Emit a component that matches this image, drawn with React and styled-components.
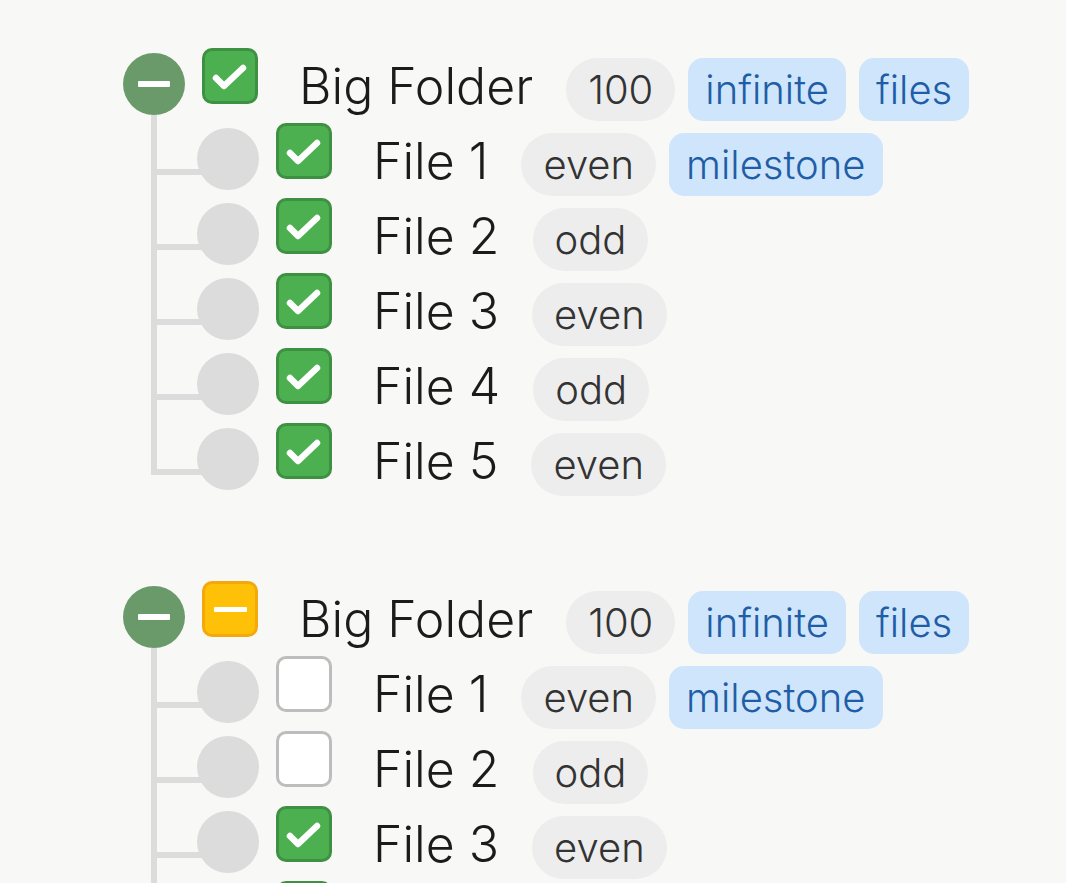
import React from "react";
import styled, { createGlobalStyle, css } from "styled-components";

const GlobalStyle = createGlobalStyle`
  html, body {
    margin: 0;
    padding: 0;
    background: #f8f8f6;
  }
  body {
    font-family: "Inter Light", Inter, "Noto Sans", "Liberation Sans", sans-serif;
    color: #1b1b1b;
  }
  * { box-sizing: border-box; }
`;

const Page = styled.div`
  display: flex;
  flex-direction: column;
  gap: 96px;
  padding: 53px 0 0 123px;
`;

const Group = styled.section`
  display: flex;
  flex-direction: column;
`;

const Row = styled.div`
  display: flex;
  align-items: center;
  height: 62px;
`;

const ChildList = styled.div`
  display: flex;
  flex-direction: column;
  padding-left: 74px;
`;

const ChildRow = styled(Row)`
  position: relative;
  margin-top: 13px;

  &::before {
    content: "";
    position: absolute;
    left: -46px;
    top: -37px;
    width: 46px;
    height: 78px;
    border-left: 6px solid #dcdcdc;
    border-bottom: 6px solid #dcdcdc;
  }

  &:first-child::before {
    top: -13px;
    height: 54px;
  }
`;

const Toggle = styled.button`
  flex: none;
  width: 62px;
  height: 62px;
  border-radius: 50%;
  border: none;
  padding: 0;
  background: #6a9a69;
  display: flex;
  align-items: center;
  justify-content: center;
  cursor: pointer;
`;

const Bar = styled.span`
  display: block;
  width: 32px;
  height: 6px;
  border-radius: 1px;
  background: #ffffff;
`;

const Dot = styled.span`
  flex: none;
  width: 62px;
  height: 62px;
  border-radius: 50%;
  background: #dcdcdc;
  position: relative;
  z-index: 1;
`;

const boxStates = {
  checked: css`
    background: #4caf50;
    border-color: #3e9142;
  `,
  partial: css`
    background: #ffc107;
    border-color: #f5a80c;
  `,
  empty: css`
    background: #ffffff;
    border-color: #bdbdbd;
  `,
};

const Box = styled.span`
  flex: none;
  width: 56px;
  height: 56px;
  margin-left: 17px;
  align-self: flex-start;
  margin-top: -5px;
  border: 3px solid;
  border-radius: 10px;
  display: flex;
  align-items: center;
  justify-content: center;
  ${(p) => boxStates[p.$state]}
`;

const BoxBar = styled.span`
  display: block;
  width: 33px;
  height: 5px;
  border-radius: 1px;
  background: #ffffff;
`;

const LabelGroup = styled.div`
  display: flex;
  align-items: baseline;
  gap: 13px;
  margin-left: 41px;
  padding-top: 8px;
`;

const Name = styled.span`
  font-size: 50px;
  font-weight: 300;
  color: #1b1b1b;
  margin-right: 20px;
  white-space: nowrap;
`;

const tagKinds = {
  plain: css`
    background: #ededed;
    color: #333333;
    border-radius: 32px;
    padding: 7px 22px;
  `,
  label: css`
    background: #cfe5fb;
    color: #1f5ea6;
    border-radius: 15px;
    padding: 7px 17px;
  `,
};

const Tag = styled.span`
  font-size: 40px;
  font-weight: 300;
  white-space: nowrap;
  ${(p) => tagKinds[p.$kind]}
`;

function CheckBox({ state }) {
  return (
    <Box $state={state}>
      {state === "checked" && (
        <svg width="50" height="50" viewBox="0 0 50 50" aria-hidden="true">
          <path
            d="M11 27 L19 35 L38 17"
            fill="none"
            stroke="#ffffff"
            strokeWidth="6.5"
            strokeLinecap="round"
            strokeLinejoin="round"
          />
        </svg>
      )}
      {state === "partial" && <BoxBar />}
    </Box>
  );
}

function Labels({ name, tags }) {
  return (
    <LabelGroup>
      <Name>{name}</Name>
      {tags.map((t) => (
        <Tag key={t.label} $kind={t.kind}>
          {t.label}
        </Tag>
      ))}
    </LabelGroup>
  );
}

const fileTags = [
  [
    { label: "even", kind: "plain" },
    { label: "milestone", kind: "label" },
  ],
  [{ label: "odd", kind: "plain" }],
  [{ label: "even", kind: "plain" }],
  [{ label: "odd", kind: "plain" }],
  [{ label: "even", kind: "plain" }],
];

const folderTags = [
  { label: "100", kind: "plain" },
  { label: "infinite", kind: "label" },
  { label: "files", kind: "label" },
];

const trees = [
  {
    name: "Big Folder",
    state: "checked",
    files: ["checked", "checked", "checked", "checked", "checked"],
  },
  {
    name: "Big Folder",
    state: "partial",
    files: ["empty", "empty", "checked", "checked", "checked"],
  },
];

function Tree({ tree }) {
  return (
    <Group>
      <Row>
        <Toggle aria-label="collapse">
          <Bar />
        </Toggle>
        <CheckBox state={tree.state} />
        <Labels name={tree.name} tags={folderTags} />
      </Row>
      <ChildList>
        {tree.files.map((state, i) => (
          <ChildRow key={i}>
            <Dot />
            <CheckBox state={state} />
            <Labels name={`File ${i + 1}`} tags={fileTags[i]} />
          </ChildRow>
        ))}
      </ChildList>
    </Group>
  );
}

export default function App() {
  return (
    <>
      <GlobalStyle />
      <Page>
        {trees.map((t, i) => (
          <Tree key={i} tree={t} />
        ))}
      </Page>
    </>
  );
}
